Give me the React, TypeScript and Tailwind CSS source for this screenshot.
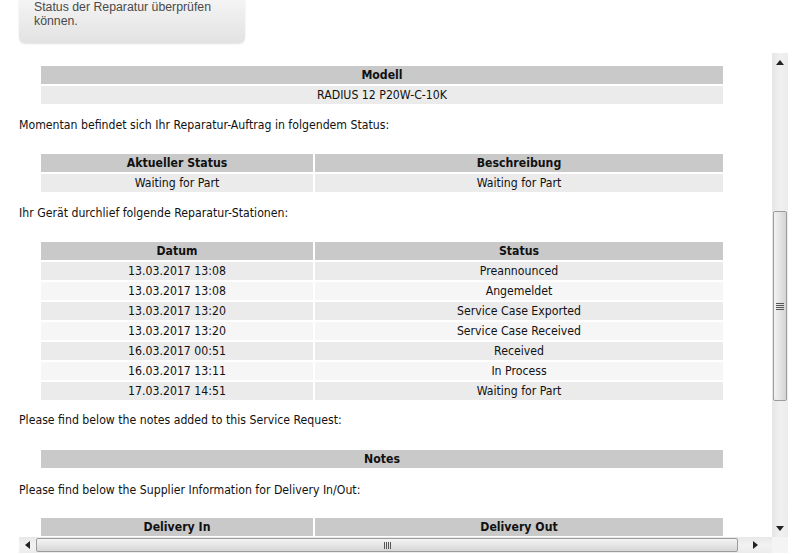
import React from "react";

const cell = "h-[18px] flex items-center justify-center whitespace-nowrap";
const head = `${cell} bg-[#c9c9c9] font-bold`;

function Row2({ a, b, bg }: { a: string; b: string; bg: string }) {
  return (
    <>
      <div className={`${cell} ${bg}`}>{a}</div>
      <div className={`${cell} ${bg}`}>{b}</div>
    </>
  );
}

const stations: [string, string][] = [
  ["13.03.2017 13:08", "Preannounced"],
  ["13.03.2017 13:08", "Angemeldet"],
  ["13.03.2017 13:20", "Service Case Exported"],
  ["13.03.2017 13:20", "Service Case Received"],
  ["16.03.2017 00:51", "Received"],
  ["16.03.2017 13:11", "In Process"],
  ["17.03.2017 14:51", "Waiting for Part"],
];

function UpArrow() {
  return (
    <svg width="8" height="5" viewBox="0 0 8 5">
      <polygon points="4,0 8,5 0,5" fill="#222" />
    </svg>
  );
}
function DownArrow() {
  return (
    <svg width="8" height="5" viewBox="0 0 8 5">
      <polygon points="0,0 8,0 4,5" fill="#222" />
    </svg>
  );
}
function LeftArrow() {
  return (
    <svg width="5" height="8" viewBox="0 0 5 8">
      <polygon points="5,0 5,8 0,4" fill="#222" />
    </svg>
  );
}
function RightArrow() {
  return (
    <svg width="5" height="8" viewBox="0 0 5 8">
      <polygon points="0,0 5,4 0,8" fill="#222" />
    </svg>
  );
}

export default function App() {
  return (
    <div className="w-[792px] h-[554px] bg-white overflow-hidden flex flex-col">
      {/* top info box */}
      <div className="ml-[19px] w-[226px] h-[43px] shrink-0 flex flex-col rounded-b-[6px] bg-gradient-to-b from-[#f4f4f4] to-[#e2e2e2] shadow-[0_1px_2px_rgba(0,0,0,0.12)] pl-[15px] font-['Liberation_Sans',Arial,sans-serif] text-[12.3px] leading-[14px] text-[#4a4a4a]">
        <div className="mt-0">
          Status der Reparatur überprüfen
          <br />
          können.
        </div>
      </div>

      {/* scroll area */}
      <div className="ml-[19px] mt-[10px] w-[769px] h-[500px] shrink-0 grid grid-cols-[753px_16px] grid-rows-[484px_16px]">
        <div className="overflow-hidden font-['DejaVu_Sans_Condensed','DejaVu_Sans',sans-serif] text-[12.2px] leading-[14px] text-[#111]">
          <div className="pt-[13px]">
            <div className="ml-[22px] w-[682px] flex flex-col gap-[2px]">
              <div className={head}>Modell</div>
              <div className={`${cell} bg-[#ebebeb]`}>RADIUS 12 P20W-C-10K</div>
            </div>

            <p className="mt-[14px]">Momentan befindet sich Ihr Reparatur-Auftrag in folgendem Status:</p>

            <div className="mt-[22px] ml-[22px] w-[682px] grid grid-cols-[272px_408px] gap-[2px]">
              <div className={head}>Aktueller Status</div>
              <div className={head}>Beschreibung</div>
              <Row2 a="Waiting for Part" b="Waiting for Part" bg="bg-[#ebebeb]" />
            </div>

            <p className="mt-[14px]">Ihr Gerät durchlief folgende Reparatur-Stationen:</p>

            <div className="mt-[22px] ml-[22px] w-[682px] grid grid-cols-[272px_408px] gap-[2px]">
              <div className={head}>Datum</div>
              <div className={head}>Status</div>
              {stations.map(([d, s], i) => (
                <Row2 key={i} a={d} b={s} bg={i % 2 === 0 ? "bg-[#ebebeb]" : "bg-[#f6f6f6]"} />
              ))}
            </div>

            <p className="mt-[13px]">Please find below the notes added to this Service Request:</p>

            <div className="mt-[23px] ml-[22px] w-[682px] flex flex-col gap-[2px]">
              <div className={head}>Notes</div>
            </div>

            <p className="mt-[15px]">Please find below the Supplier Information for Delivery In/Out:</p>

            <div className="mt-[21px] ml-[22px] w-[682px] grid grid-cols-[272px_408px] gap-[2px]">
              <div className={head}>Delivery In</div>
              <div className={head}>Delivery Out</div>
              <Row2 a="" b="" bg="bg-[#ebebeb]" />
            </div>
          </div>
        </div>

        {/* vertical scrollbar */}
        <div className="flex flex-col bg-gradient-to-r from-[#e6e6e6] via-[#f0f0f0] to-[#ececec]">
          <div className="h-[19px] flex items-center justify-center">
            <UpArrow />
          </div>
          <div className="h-[139px]" />
          <div className="h-[190px] mx-[1px] rounded-[2px] border border-[#9c9c9c] bg-gradient-to-r from-[#f2f2f2] via-[#e4e4e4] to-[#d4d4d4] flex flex-col items-center justify-center gap-[1px]">
            <div className="w-[8px] h-[1px] bg-[#555]" />
            <div className="w-[8px] h-[1px] bg-[#555]" />
            <div className="w-[8px] h-[1px] bg-[#555]" />
            <div className="w-[8px] h-[1px] bg-[#555]" />
          </div>
          <div className="flex-1" />
          <div className="h-[17px] flex items-center justify-center">
            <DownArrow />
          </div>
        </div>

        {/* horizontal scrollbar */}
        <div className="flex items-stretch bg-gradient-to-b from-[#e8e8e8] via-[#f2f2f2] to-[#ececec]">
          <div className="w-[17px] flex items-center justify-center">
            <LeftArrow />
          </div>
          <div className="w-[702px] my-[1px] rounded-[2px] border border-[#9c9c9c] bg-gradient-to-b from-[#f4f4f4] via-[#e6e6e6] to-[#d6d6d6] flex items-center justify-center gap-[1px]">
            <div className="w-[1px] h-[7px] bg-[#555]" />
            <div className="w-[1px] h-[7px] bg-[#555]" />
            <div className="w-[1px] h-[7px] bg-[#555]" />
            <div className="w-[1px] h-[7px] bg-[#555]" />
          </div>
          <div className="flex-1 flex items-center justify-center">
            <RightArrow />
          </div>
        </div>
        <div className="bg-[#f4f4f4]" />
      </div>
    </div>
  );
}
